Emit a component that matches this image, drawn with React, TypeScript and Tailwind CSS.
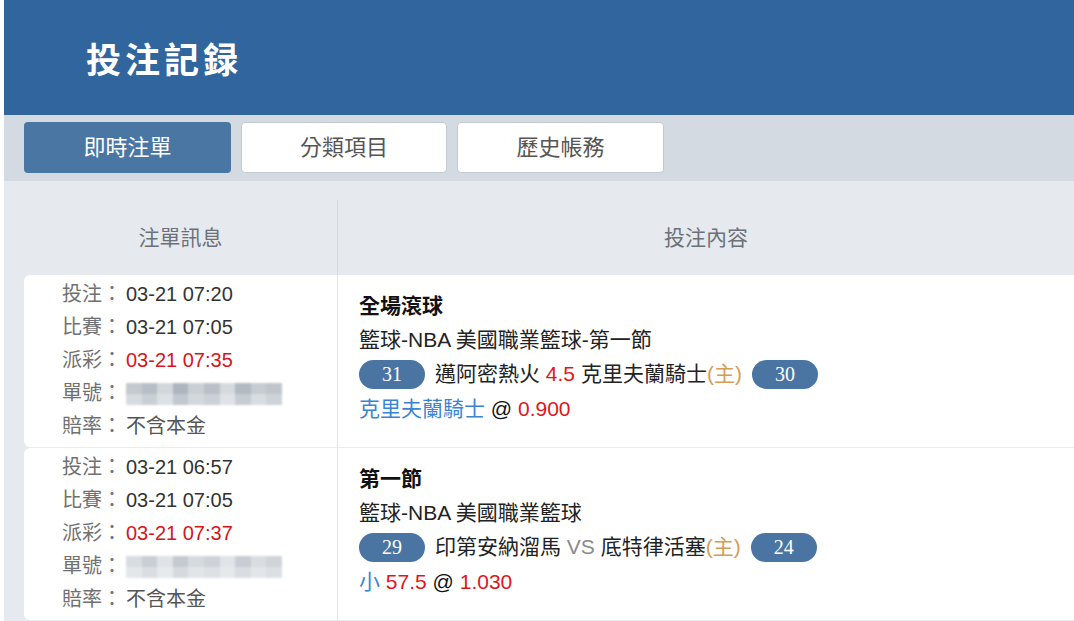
import React from "react";

const FONT = { fontFamily: '"Liberation Sans", "Noto Sans CJK TC", sans-serif' };

function Pill({ n }: { n: string }) {
  return (
    <span
      className="inline-flex items-center justify-center w-[66px] h-[29px] rounded-full bg-[#4a75a2] text-white text-[20px] leading-none"
      style={{ fontFamily: '"Liberation Serif", "Noto Sans CJK TC", serif' }}
    >
      {n}
    </span>
  );
}

function Blur({ light }: { light?: boolean }) {
  const top = light
    ? ["#d8dde2", "#c9ced4", "#dfe3e7", "#c4cad0", "#d5dadf", "#cdd2d8", "#e0e4e8", "#c8cdd3", "#d9dde1", "#cfd4d9"]
    : ["#c3c9cf", "#b7bec5", "#d2d7dc", "#aeb5bd", "#c9cfd5", "#b9c0c7", "#d5dadf", "#b2b9c1", "#c6ccd2", "#bfc5cc"];
  const bottom = light
    ? ["#e4e7ea", "#dadee2", "#e7eaed", "#d6dadf", "#e2e5e8", "#dde1e5", "#e6e9ec", "#d9dde1", "#e3e6e9", "#dce0e4"]
    : ["#d6dbe0", "#c9cfd5", "#dde1e5", "#c2c8cf", "#d3d8dd", "#cbd1d7", "#dfe3e7", "#c6ccd2", "#d8dde1", "#ced3d8"];
  return (
    <span className="inline-flex flex-col w-[156px] h-[22px] blur-[1.2px] align-middle">
      <span className="flex flex-1">
        {top.map((c, i) => (
          <span key={i} className="flex-1" style={{ background: c }} />
        ))}
      </span>
      <span className="flex flex-1">
        {bottom.map((c, i) => (
          <span key={i} className="flex-1" style={{ background: c }} />
        ))}
      </span>
    </span>
  );
}

function InfoLine({ label, children }: { label: string; children: React.ReactNode }) {
  return (
    <div className="flex items-center h-[33px]">
      <span className="w-[64px] text-[#707070]">{label}</span>
      <span>{children}</span>
    </div>
  );
}

function Row({
  bet,
  match,
  pay,
  lightBlur,
  title,
  league,
  home,
  away,
  line,
  pick,
}: {
  bet: string;
  match: string;
  pay: string;
  lightBlur?: boolean;
  title: string;
  league: string;
  home: [string, React.ReactNode];
  away: string;
  line: React.ReactNode;
  pick: React.ReactNode;
}) {
  return (
    <div className="flex h-[173px] border-b border-[#e9ecef]">
      <div className="w-[313px] bg-white rounded-l-[6px] pl-[38px] pt-[2px] text-[20px] text-[#333]">
        <InfoLine label="投注：">{bet}</InfoLine>
        <InfoLine label="比賽：">{match}</InfoLine>
        <InfoLine label="派彩：">
          <span className="text-[#d8141b]">{pay}</span>
        </InfoLine>
        <InfoLine label="單號：">
          <Blur light={lightBlur} />
        </InfoLine>
        <InfoLine label="賠率：">
          <span className="text-[#555]">不含本金</span>
        </InfoLine>
      </div>
      <div className="flex-1 bg-white border-l border-[#e1e5e9] pl-[21px] pt-[14px] text-[21px] text-[#222]">
        <div className="h-[34px] flex items-center font-bold text-[#111]">{title}</div>
        <div className="h-[34px] flex items-center">{league}</div>
        <div className="h-[34px] flex items-center gap-[10px]">
          <Pill n={home[0]} />
          <span>{home[1]}</span>
          <Pill n={away} />
        </div>
        <div className="h-[36px] flex items-center">{pick}</div>
        {line}
      </div>
    </div>
  );
}

export default function App() {
  return (
    <div className="w-[1074px] h-[621px] bg-white pl-[4px] overflow-hidden" style={FONT}>
      <div className="h-[115px] bg-[#31659d] flex items-center pl-[82px]">
        <span
          className="text-white text-[35px] font-bold tracking-[4px] leading-none"
          style={{ fontFamily: '"Noto Sans CJK TC", "Noto Sans CJK JP", serif' }}
        >
          投注記録
        </span>
      </div>
      <div className="h-[66px] bg-[#d3dae2] flex gap-[10px] pl-[20px] pt-[7px]">
        <div className="w-[207px] h-[51px] rounded-[4px] bg-[#4a76a3] text-white text-[22px] flex items-center justify-center">
          即時注單
        </div>
        <div className="w-[206px] h-[51px] rounded-[4px] bg-white border border-[#c2cad3] text-[#555] text-[22px] flex items-center justify-center">
          分類項目
        </div>
        <div className="w-[207px] h-[51px] rounded-[4px] bg-white border border-[#c2cad3] text-[#555] text-[22px] flex items-center justify-center">
          歷史帳務
        </div>
      </div>
      <div className="bg-[#e6eaef] pl-[20px] pt-[19px] h-[440px]">
        <div className="flex h-[75px] text-[21px] text-[#6b7178]">
          <div className="w-[313px] flex items-center justify-center">注單訊息</div>
          <div className="flex-1 border-l border-[#d6dbe1] flex items-center justify-center">投注內容</div>
        </div>
        <Row
          bet="03-21 07:20"
          match="03-21 07:05"
          pay="03-21 07:35"
          title="全場滾球"
          league="籃球-NBA 美國職業籃球-第一節"
          home={[
            "31",
            <>
              邁阿密熱火 <span className="text-[#e0161b]">4.5</span> 克里夫蘭騎士
              <span className="text-[#d69c55]">(主)</span>
            </>,
          ]}
          away="30"
          line={null}
          pick={
            <>
              <span className="text-[#3a84d4]">克里夫蘭騎士</span>
              <span className="text-[#111]">&nbsp;@&nbsp;</span>
              <span className="text-[#e0161b]">0.900</span>
            </>
          }
        />
        <Row
          bet="03-21 06:57"
          match="03-21 07:05"
          pay="03-21 07:37"
          lightBlur
          title="第一節"
          league="籃球-NBA 美國職業籃球"
          home={[
            "29",
            <>
              印第安納溜馬 <span className="text-[#8a8a8a]">VS</span> 底特律活塞
              <span className="text-[#d69c55]">(主)</span>
            </>,
          ]}
          away="24"
          line={null}
          pick={
            <>
              <span className="text-[#3a84d4]">小</span>
              <span className="text-[#e0161b]">&nbsp;57.5</span>
              <span className="text-[#111]">&nbsp;@&nbsp;</span>
              <span className="text-[#e0161b]">1.030</span>
            </>
          }
        />
      </div>
    </div>
  );
}
